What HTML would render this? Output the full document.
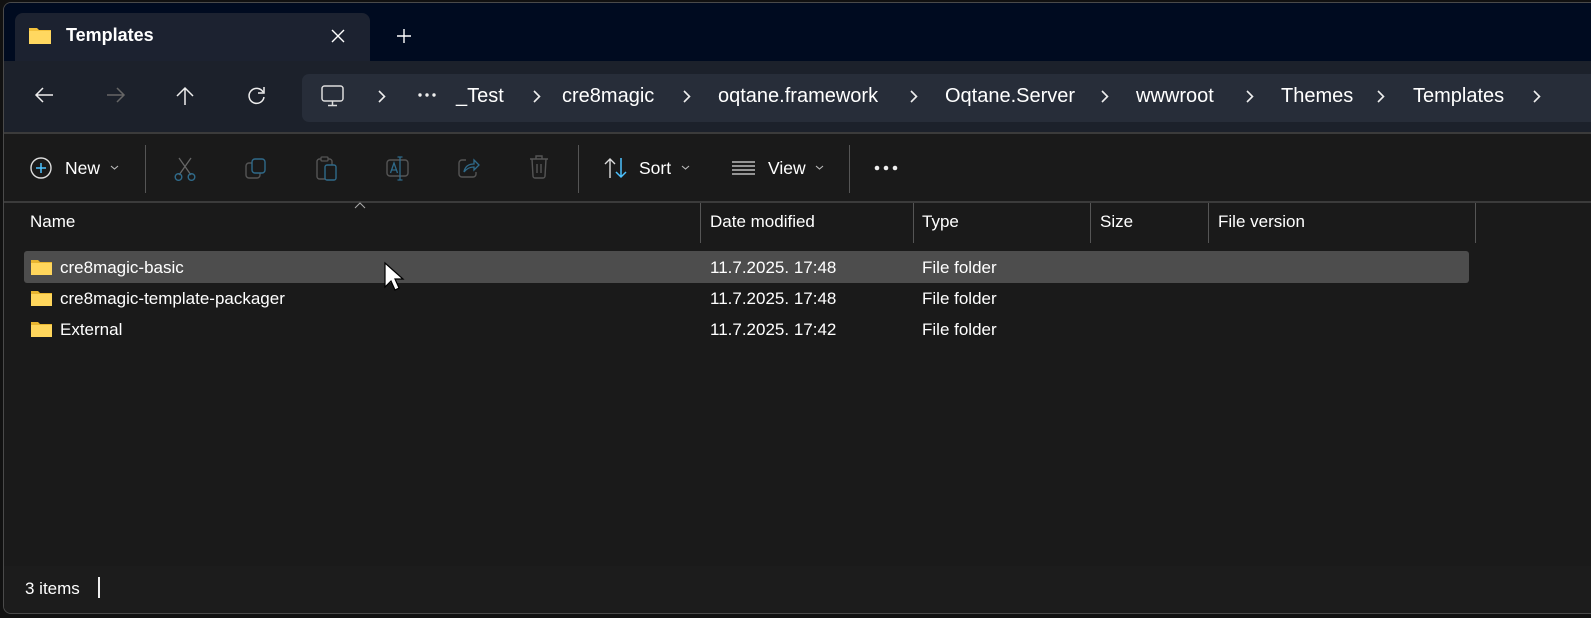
<!DOCTYPE html>
<html><head><meta charset="utf-8"><style>
*{margin:0;padding:0;box-sizing:border-box}
body{width:1591px;height:618px;background:#111;position:relative;overflow:hidden;font-family:"Liberation Sans",sans-serif;color:#fff}
.a{position:absolute}
.win{left:3px;top:2px;width:1600px;height:612px;background:#1a1a1a;border:1px solid #4a4a4a;border-radius:8px;overflow:hidden}
.t{font-size:20px;white-space:nowrap;top:85px}
.s{font-size:17px;white-space:nowrap}
svg{position:absolute;overflow:visible}
.vl{background:#555;width:1px}
.ch{top:90px}
</style></head><body>
<div class="a win">
 <div class="a" style="left:0;top:0;width:1600px;height:58px;background:#000b20"></div>
 <div class="a" style="left:11px;top:10px;width:355px;height:50px;background:#1c2230;border-radius:8px 8px 0 0"></div>
 <div class="a" style="left:0;top:58px;width:1600px;height:71px;background:#1c212b"></div>
 <div class="a" style="left:298px;top:71px;width:1300px;height:48px;background:#272d39;border-radius:7px"></div>
 <div class="a" style="left:0;top:129px;width:1600px;height:2px;background:#3b3b3b"></div>
 <div class="a" style="left:0;top:198px;width:1600px;height:2px;background:#3b3b3b"></div>
 <div class="a" style="left:0;top:563px;width:1600px;height:50px;background:#1c1c1c"></div>
</div>
<!-- tab -->
<svg style="left:29px;top:26px" width="22" height="18"><path d="M0 2h8l2 2h12v14H0z" fill="#f4c23c"/><path d="M0 5h22v13H0z" fill="#ffd860"/></svg>
<div class="a" style="left:66px;top:25px;font-size:18px;font-weight:bold;white-space:nowrap">Templates</div>
<svg style="left:331px;top:29px" width="14" height="14"><path d="M1 1L13 13M13 1L1 13" stroke="#fff" stroke-width="1.4"/></svg>
<svg style="left:396px;top:28px" width="16" height="16"><path d="M8 1v14M1 8h14" stroke="#fff" stroke-width="1.4"/></svg>
<!-- nav -->
<svg style="left:34px;top:87px" width="20" height="16"><path d="M19 8H2M9 1L2 8l7 7" stroke="#eee" stroke-width="1.5" fill="none"/></svg>
<svg style="left:106px;top:87px" width="20" height="16"><path d="M1 8h17M11 1l7 7-7 7" stroke="#666" stroke-width="1.5" fill="none"/></svg>
<svg style="left:176px;top:86px" width="18" height="20"><path d="M9 19V2M1 10l8-8 8 8" stroke="#eee" stroke-width="1.5" fill="none"/></svg>
<svg style="left:247px;top:86px" width="19" height="19"><path d="M16 6A7.5 7.5 0 1 0 17 11" stroke="#eee" stroke-width="1.5" fill="none"/><path d="M17 1v6h-6" stroke="#eee" stroke-width="1.5" fill="none"/></svg>
<!-- breadcrumb -->
<svg style="left:321px;top:85px" width="24" height="22"><rect x="1" y="1" width="21" height="15" rx="2.5" stroke="#ddd" stroke-width="1.5" fill="none"/><path d="M11.5 16v4M7 20.5h9" stroke="#ddd" stroke-width="1.5"/></svg>
<svg class="ch" style="left:378px" width="8" height="13"><path d="M1 1l5.5 5.5L1 12" stroke="#eee" stroke-width="1.6" fill="none"/></svg>
<svg style="left:418px;top:93px" width="18" height="4"><circle cx="2" cy="2" r="1.7" fill="#eee"/><circle cx="9" cy="2" r="1.7" fill="#eee"/><circle cx="16" cy="2" r="1.7" fill="#eee"/></svg>
<div class="a t" style="left:456px">_Test</div>
<svg class="ch" style="left:533px" width="8" height="13"><path d="M1 1l5.5 5.5L1 12" stroke="#eee" stroke-width="1.6" fill="none"/></svg>
<div class="a t" style="left:562px">cre8magic</div>
<svg class="ch" style="left:683px" width="8" height="13"><path d="M1 1l5.5 5.5L1 12" stroke="#eee" stroke-width="1.6" fill="none"/></svg>
<div class="a t" style="left:718px">oqtane.framework</div>
<svg class="ch" style="left:910px" width="8" height="13"><path d="M1 1l5.5 5.5L1 12" stroke="#eee" stroke-width="1.6" fill="none"/></svg>
<div class="a t" style="left:945px">Oqtane.Server</div>
<svg class="ch" style="left:1101px" width="8" height="13"><path d="M1 1l5.5 5.5L1 12" stroke="#eee" stroke-width="1.6" fill="none"/></svg>
<div class="a t" style="left:1136px">wwwroot</div>
<svg class="ch" style="left:1246px" width="8" height="13"><path d="M1 1l5.5 5.5L1 12" stroke="#eee" stroke-width="1.6" fill="none"/></svg>
<div class="a t" style="left:1281px">Themes</div>
<svg class="ch" style="left:1377px" width="8" height="13"><path d="M1 1l5.5 5.5L1 12" stroke="#eee" stroke-width="1.6" fill="none"/></svg>
<div class="a t" style="left:1413px">Templates</div>
<svg class="ch" style="left:1533px" width="8" height="13"><path d="M1 1l5.5 5.5L1 12" stroke="#eee" stroke-width="1.6" fill="none"/></svg>
<!-- toolbar -->
<svg style="left:30px;top:157px" width="22" height="22"><circle cx="11" cy="11" r="10" stroke="#ddd" stroke-width="1.4" fill="none"/><path d="M11 6v10M6 11h10" stroke="#4cc2ff" stroke-width="1.5"/></svg>
<div class="a s" style="left:65px;top:158px;font-size:17.5px">New</div>
<svg style="left:110px;top:165px" width="9" height="5"><path d="M1 1l3.5 3L8 1" stroke="#bbb" stroke-width="1.1" fill="none"/></svg>
<div class="a vl" style="left:145px;top:145px;height:48px"></div>
<svg style="left:174px;top:157px" width="22" height="24"><path d="M5 1l12 17M17 1L5 18" stroke="#666" stroke-width="1.3"/><circle cx="4.5" cy="20" r="3.3" stroke="#2f6a8a" stroke-width="1.4" fill="none"/><circle cx="17.5" cy="20" r="3.3" stroke="#2f6a8a" stroke-width="1.4" fill="none"/></svg>
<svg style="left:245px;top:158px" width="22" height="22"><rect x="1" y="5" width="14" height="15" rx="3" stroke="#555" stroke-width="1.4" fill="none"/><rect x="7" y="1" width="13" height="14" rx="3" stroke="#2f6a8a" stroke-width="1.4" fill="#1a1a1a"/></svg>
<svg style="left:316px;top:156px" width="22" height="25"><rect x="1" y="3" width="15" height="20" rx="2.5" stroke="#555" stroke-width="1.4" fill="none"/><rect x="5" y="1" width="7" height="4" rx="1" stroke="#555" stroke-width="1.3" fill="#1a1a1a"/><rect x="9" y="9" width="11" height="15" rx="2" stroke="#2f6a8a" stroke-width="1.4" fill="#1a1a1a"/></svg>
<svg style="left:386px;top:156px" width="24" height="25"><rect x="1" y="4" width="21" height="16" rx="3" stroke="#555" stroke-width="1.4" fill="none"/><path d="M4.5 17l3.5-10 3.5 10M6 14h4" stroke="#2f6a8a" stroke-width="1.3" fill="none"/><path d="M14 1v23M11.5 1h5M11.5 24h5" stroke="#2f6a8a" stroke-width="1.3"/></svg>
<svg style="left:458px;top:157px" width="22" height="22"><path d="M8 3H4a3 3 0 0 0-3 3v11a3 3 0 0 0 3 3h11a3 3 0 0 0 3-3v-2" stroke="#555" stroke-width="1.4" fill="none"/><path d="M6 15c1-6 5-8 10-8V3l5 5-5 5V10c-4 0-7 1-10 5z" stroke="#2f6a8a" stroke-width="1.3" fill="none"/></svg>
<svg style="left:529px;top:155px" width="20" height="24"><path d="M1 4h18M7 4V1h6v3M3 4l1 17a2 2 0 0 0 2 2h8a2 2 0 0 0 2-2l1-17M8 9v9M12 9v9" stroke="#555" stroke-width="1.4" fill="none"/></svg>
<div class="a vl" style="left:578px;top:145px;height:48px"></div>
<svg style="left:604px;top:157px" width="24" height="22"><path d="M6 21V2M1 7l5-5 5 5" stroke="#ddd" stroke-width="1.4" fill="none"/><path d="M17 1v19M12 15l5 5 5-5" stroke="#4cc2ff" stroke-width="1.5" fill="none"/></svg>
<div class="a s" style="left:639px;top:158px;font-size:17.5px">Sort</div>
<svg style="left:681px;top:165px" width="9" height="5"><path d="M1 1l3.5 3L8 1" stroke="#bbb" stroke-width="1.1" fill="none"/></svg>
<svg style="left:732px;top:161px" width="24" height="14"><path d="M0 1h23M0 5h23M0 9h23M0 13h23" stroke="#ddd" stroke-width="1.3"/></svg>
<div class="a s" style="left:768px;top:158px;font-size:17.5px">View</div>
<svg style="left:815px;top:165px" width="9" height="5"><path d="M1 1l3.5 3L8 1" stroke="#bbb" stroke-width="1.1" fill="none"/></svg>
<div class="a vl" style="left:849px;top:145px;height:48px"></div>
<svg style="left:874px;top:165px" width="26" height="6"><circle cx="3" cy="3" r="2.3" fill="#eee"/><circle cx="12" cy="3" r="2.3" fill="#eee"/><circle cx="21" cy="3" r="2.3" fill="#eee"/></svg>
<!-- header -->
<svg style="left:354px;top:202px" width="12" height="7"><path d="M1 6l5-5 5 5" stroke="#aaa" stroke-width="1" fill="none"/></svg>
<div class="a s" style="left:30px;top:212px">Name</div>
<div class="a vl" style="left:700px;top:203px;height:40px"></div>
<div class="a s" style="left:710px;top:212px">Date modified</div>
<div class="a vl" style="left:913px;top:203px;height:40px"></div>
<div class="a s" style="left:922px;top:212px">Type</div>
<div class="a vl" style="left:1090px;top:203px;height:40px"></div>
<div class="a s" style="left:1100px;top:212px">Size</div>
<div class="a vl" style="left:1208px;top:203px;height:40px"></div>
<div class="a s" style="left:1218px;top:212px">File version</div>
<div class="a vl" style="left:1475px;top:203px;height:40px"></div>
<!-- rows -->
<div class="a" style="left:24px;top:251px;width:1445px;height:32px;background:#4d4d4d;border-radius:3px"></div>
<svg style="left:31px;top:259px" width="21" height="16"><path d="M0 1h7l2 2h12v13H0z" fill="#e8b530"/><path d="M0 4h21v12H0z" fill="#ffd65c"/></svg>
<div class="a s" style="left:60px;top:258px">cre8magic-basic</div>
<div class="a s" style="left:710px;top:258px">11.7.2025. 17:48</div>
<div class="a s" style="left:922px;top:258px">File folder</div>
<svg style="left:31px;top:290px" width="21" height="16"><path d="M0 1h7l2 2h12v13H0z" fill="#e8b530"/><path d="M0 4h21v12H0z" fill="#ffd65c"/></svg>
<div class="a s" style="left:60px;top:289px">cre8magic-template-packager</div>
<div class="a s" style="left:710px;top:289px">11.7.2025. 17:48</div>
<div class="a s" style="left:922px;top:289px">File folder</div>
<svg style="left:31px;top:321px" width="21" height="16"><path d="M0 1h7l2 2h12v13H0z" fill="#e8b530"/><path d="M0 4h21v12H0z" fill="#ffd65c"/></svg>
<div class="a s" style="left:60px;top:320px">External</div>
<div class="a s" style="left:710px;top:320px">11.7.2025. 17:42</div>
<div class="a s" style="left:922px;top:320px">File folder</div>
<!-- cursor -->
<svg style="left:384px;top:262px" width="20" height="34"><path d="M1 1v24l6-6 4 9 4-2-4-9h8z" fill="#fff" stroke="#000" stroke-width="1.2"/></svg>
<!-- status -->
<div class="a s" style="left:25px;top:579px">3 items</div>
<div class="a" style="left:98px;top:577px;width:2px;height:21px;background:#eee"></div>
</body></html>
